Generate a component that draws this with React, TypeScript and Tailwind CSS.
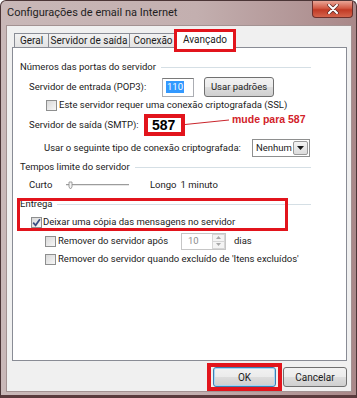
import React from "react";

function Checkbox({ checked = false }: { checked?: boolean }) {
  return (
    <span className="w-[11px] h-[11px] shrink-0 border border-[#8e8f8f] bg-[linear-gradient(135deg,#d9d9d9,#f7f7f7)] flex items-center justify-center">
      {checked && (
        <svg width="9" height="9" viewBox="0 0 9 9">
          <path d="M1.2 4.6 L3.6 7.3 L7.9 1.2" fill="none" stroke="#3b4e82" strokeWidth="1.7" />
        </svg>
      )}
    </span>
  );
}

function Group({ label, className }: { label: string; className: string }) {
  return (
    <div className={"flex items-center pl-[7px] pr-[35px] " + className}>
      <span>{label}</span>
      <span className="flex-1 h-px bg-[#d5dfe5] ml-[5px]" />
    </div>
  );
}

const tabs = [
  { label: "Geral", w: "w-[35px]" },
  { label: "Servidor de saída", w: "w-[82px]" },
  { label: "Conexão", w: "w-[48px]" },
];

export default function App() {
  return (
    <div className="w-[357px] h-[398px] flex flex-col border border-[#4b3536] border-b-[3px] border-b-[#5a3b3d] rounded-t-[6px] bg-[linear-gradient(90deg,#c9b8b8,#c3afaf_55%,#a98889)] text-[9.5px] text-[#1b1b1b] whitespace-nowrap font-['Roboto','Liberation_Sans',sans-serif] overflow-hidden">
      {/* Title bar */}
      <div className="relative h-[24px] shrink-0 flex items-center pl-[6px] text-[11px] text-[#1e1e1e]">
        Configurações de email na Internet
        <div className="absolute right-[3px] top-0 w-[41px] h-[17px] rounded-b-[4px] border border-t-0 border-[#6d2f2b] bg-[linear-gradient(#e9a596,#d25a44_45%,#c13a25_55%,#d4644c)] flex items-center justify-center">
          <svg width="12" height="10" viewBox="0 0 12 10">
            <path d="M2 1 L10 9 M10 1 L2 9" stroke="#5a2a26" strokeWidth="3.4" strokeLinecap="round" />
            <path d="M2 1 L10 9 M10 1 L2 9" stroke="#ffffff" strokeWidth="2" strokeLinecap="round" />
          </svg>
        </div>
      </div>

      {/* Client area */}
      <div className="flex-1 ml-[5px] mr-[4px] mb-[3px] border border-[#a39292] bg-[#f0f0f0] flex flex-col pl-[5px] pr-[4px] pt-[4px]">
        {/* Tabs */}
        <div className="relative z-10 h-[17px] ml-[2px] flex items-end text-[10px]">
          {tabs.map((t) => (
            <div
              key={t.label}
              className={
                t.w +
                " h-[14px] -mr-px border border-b-0 border-[#898c95] bg-[linear-gradient(#f2f2f2,#e3e3e3)] flex items-center justify-center overflow-hidden"
              }
            >
              {t.label}
            </div>
          ))}
          <div className="relative w-[58px] h-[18px] -mb-px border border-b-0 border-[#898c95] bg-white flex items-center justify-center">
            Avançado
            <div className="absolute -left-[3px] -top-[2px] w-[62px] h-[23px] border-[3px] border-[#e2141c]" />
          </div>
        </div>

        {/* Panel */}
        <div className="h-[314px] shrink-0 border border-[#898c95] bg-white flex flex-col pt-[9px]">
          <Group label="Números das portas do servidor" className="h-[20px]" />

          <div className="h-[20px] flex items-center pl-[16px]">
            <span className="w-[133px] shrink-0">Servidor de entrada (POP3):</span>
            <div className="w-[32px] h-[19px] border border-[#abadb3] border-t-[#7a7a7a] flex items-center pl-[3px]">
              <span className="bg-[#3399ff] text-white px-px leading-[12px]">110</span>
            </div>
            <div className="ml-[10px] w-[70px] h-[20px] rounded-[3px] border border-[#707070] bg-[linear-gradient(#f2f2f2_0%,#ebebeb_50%,#dddddd_51%,#cfcfcf_100%)] flex items-center justify-center">
              Usar padrões
            </div>
          </div>

          <div className="h-[16px] flex items-center pl-[33px] gap-[2px]">
            <Checkbox />
            <span>Este servidor requer uma conexão criptografada (SSL)</span>
          </div>

          <div className="h-[24px] flex items-center pl-[16px]">
            <span className="w-[115px] shrink-0">Servidor de saída (SMTP):</span>
            <div className="w-[41px] h-[22px] shrink-0 border-[4px] border-[#e2141c] bg-white flex items-center pl-[4px] text-[14px] font-bold text-black font-['Liberation_Sans',sans-serif]">
              587
            </div>
            <svg width="45" height="24" viewBox="0 0 45 24" className="shrink-0">
              <line x1="0" y1="11.5" x2="44" y2="7" stroke="#c9252c" strokeWidth="1" />
            </svg>
            <span className="ml-[2px] mb-[10px] text-[10.5px] font-bold text-[#d2232a] font-['Liberation_Sans',sans-serif]">
              mude para 587
            </span>
          </div>

          <div className="h-[22px] flex items-center pl-[31px]">
            <span className="w-[208px] shrink-0">Usar o seguinte tipo de conexão criptografada:</span>
            <div className="w-[58px] h-[18px] shrink-0 border border-[#8e8f8f] bg-white flex items-center">
              <span className="flex-1 pl-[3px]">Nenhum</span>
              <div className="w-[15px] h-[14px] mr-px border border-[#9a9a9a] rounded-[2px] bg-[linear-gradient(#f4f4f4,#dcdcdc)] flex items-center justify-center">
                <svg width="7" height="4" viewBox="0 0 7 4">
                  <path d="M0 0 H7 L3.5 4 Z" fill="#1a1a1a" />
                </svg>
              </div>
            </div>
          </div>

          <Group label="Tempos limite do servidor" className="h-[16px]" />

          <div className="h-[20px] flex items-center pl-[16px]">
            <span className="w-[37px] shrink-0">Curto</span>
            <svg width="63" height="12" viewBox="0 0 63 12" className="shrink-0">
              <rect x="0" y="5" width="63" height="1" fill="#9c9c9c" />
              <rect x="0" y="6" width="63" height="1" fill="#e6e6e6" />
              <path d="M3 3 H6 V8 L4.5 10 L3 8 Z" fill="#f4f4f4" stroke="#8a8a8a" strokeWidth="0.8" />
            </svg>
            <span className="ml-[21px]">Longo</span>
            <span className="ml-[4px]">1 minuto</span>
          </div>

          <div className="relative">
            <Group label="Entrega" className="h-[18px]" />
            <div className="h-[19px] flex items-center pl-[18px] gap-[1px]">
              <Checkbox checked />
              <span>Deixar uma cópia das mensagens no servidor</span>
            </div>
            <div className="absolute left-[4px] top-[3px] w-[271px] h-[33px] border-[3px] border-[#e2141c]" />
          </div>

          <div className="h-[18px] flex items-center pl-[32px]">
            <Checkbox />
            <span className="ml-[2px] w-[123px] shrink-0">Remover do servidor após</span>
            <div className="w-[45px] h-[17px] shrink-0 border border-[#c6c6c6] bg-white flex items-center">
              <span className="flex-1 pl-[6px] text-[#8d8d8d]">10</span>
              <div className="w-[13px] h-[15px] flex flex-col">
                <div className="flex-1 border border-[#d6d6d6] bg-[#f4f4f4] flex items-center justify-center">
                  <svg width="5" height="3" viewBox="0 0 5 3"><path d="M0 3 H5 L2.5 0 Z" fill="#a8a8a8" /></svg>
                </div>
                <div className="flex-1 border border-t-0 border-[#d6d6d6] bg-[#f4f4f4] flex items-center justify-center">
                  <svg width="5" height="3" viewBox="0 0 5 3"><path d="M0 0 H5 L2.5 3 Z" fill="#a8a8a8" /></svg>
                </div>
              </div>
            </div>
            <span className="ml-[8px]">dias</span>
          </div>

          <div className="h-[16px] mt-[1px] flex items-center pl-[32px] gap-[2px]">
            <Checkbox />
            <span>Remover do servidor quando excluído de 'Itens excluídos'</span>
          </div>
        </div>

        {/* Buttons */}
        <div className="flex justify-end gap-[7px] pt-[6px] text-[10px]">
          <div className="relative w-[63px] h-[20px] rounded-[3px] border border-[#3c7fb1] shadow-[inset_0_0_0_1px_#a7d6f5] bg-[linear-gradient(#f2f2f2_0%,#ebebeb_50%,#dddddd_51%,#cfcfcf_100%)] flex items-center justify-center">
            OK
            <div className="absolute -left-[7px] -top-[5px] w-[75px] h-[28px] border-[4px] border-[#e2141c]" />
          </div>
          <div className="w-[64px] h-[20px] rounded-[3px] border border-[#707070] bg-[linear-gradient(#f2f2f2_0%,#ebebeb_50%,#dddddd_51%,#cfcfcf_100%)] flex items-center justify-center">
            Cancelar
          </div>
        </div>
      </div>
    </div>
  );
}
